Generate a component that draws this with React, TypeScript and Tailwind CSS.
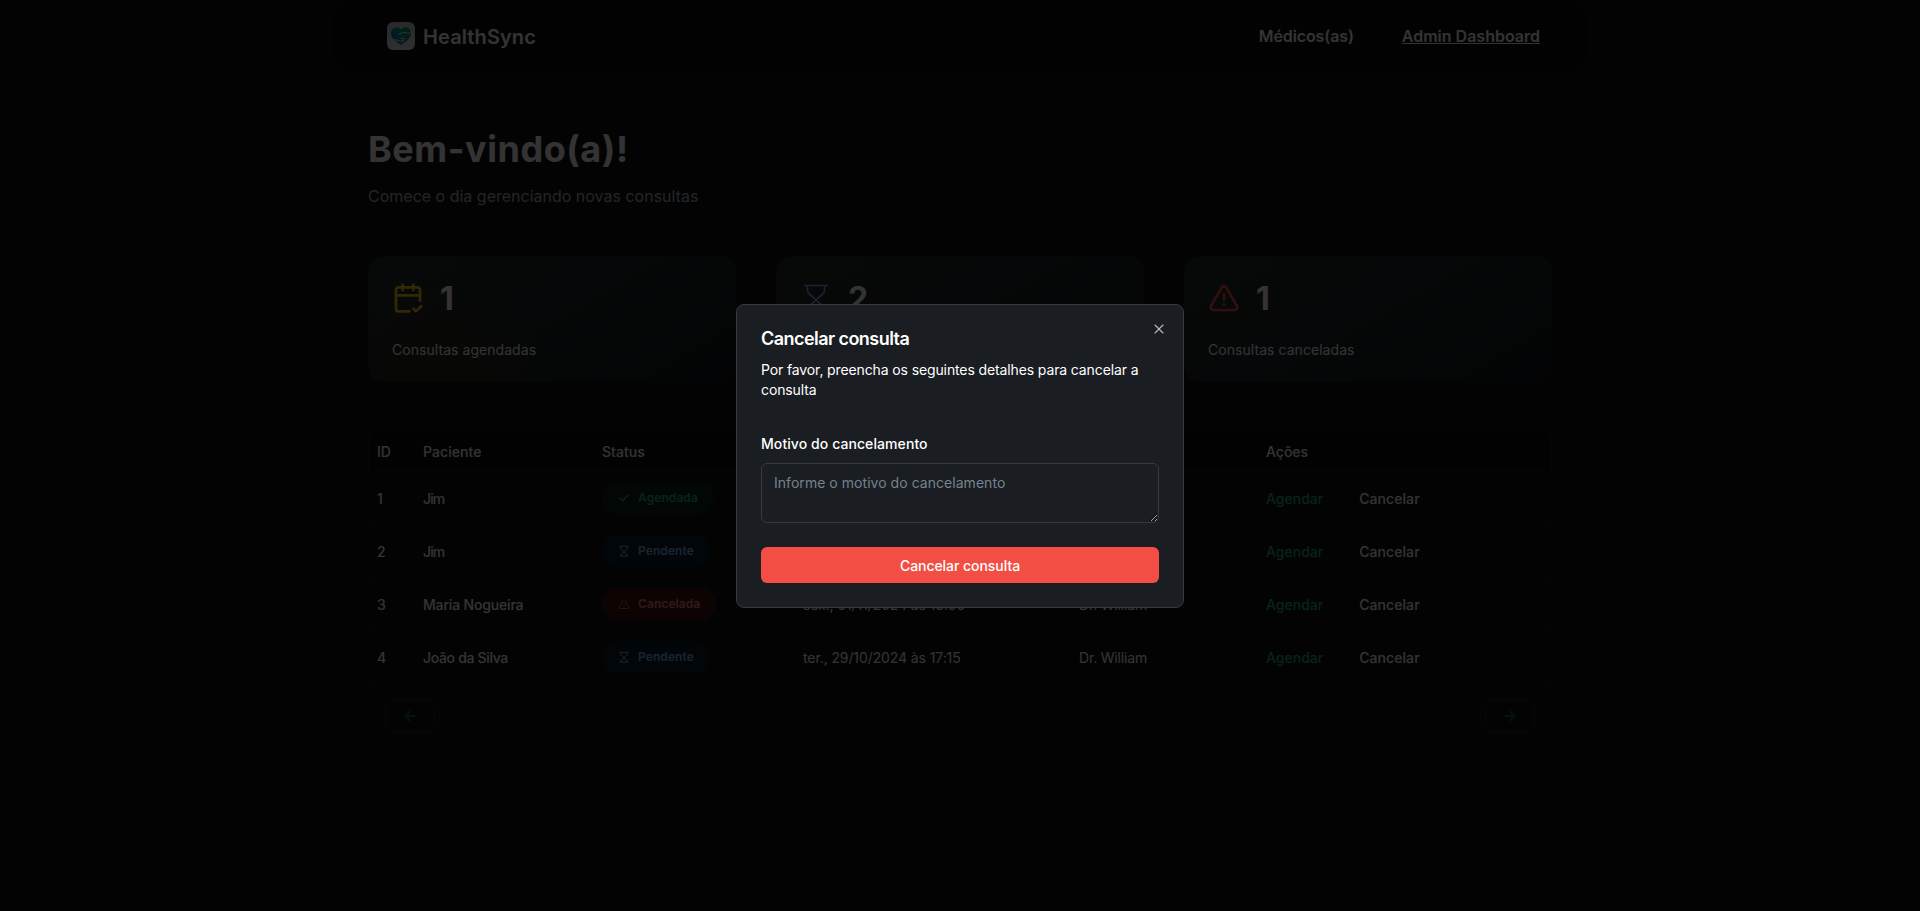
import React from "react";
import { ArrowLeft, ArrowRight, CalendarCheck2, Check, TriangleAlert, X } from "lucide-react";

type Status = "Agendada" | "Pendente" | "Cancelada";

const rows: { id: number; patient: string; tracking: string; status: Status; date: string; doctor: string }[] = [
  { id: 1, patient: "Jim", tracking: "tracking-[-0.9px]", status: "Agendada", date: "qui., 31/10/2024 às 14:00", doctor: "Dr. William" },
  { id: 2, patient: "Jim", tracking: "tracking-[-0.9px]", status: "Pendente", date: "qua., 30/10/2024 às 10:00", doctor: "Dr. William" },
  { id: 3, patient: "Maria Nogueira", tracking: "tracking-[-0.17px]", status: "Cancelada", date: "sex., 01/11/2024 às 16:00", doctor: "Dr. William" },
  { id: 4, patient: "João da Silva", tracking: "tracking-[-0.33px]", status: "Pendente", date: "ter., 29/10/2024 às 17:15", doctor: "Dr. William" },
];

const columns = "grid grid-cols-[46px_179px_201px_276px_187px_1fr] items-center *:px-2";

function Hourglass({ className, stroke = 1.2 }: { className: string; stroke?: number }) {
  return (
    <svg viewBox="0 0 32 32" fill="none" stroke="currentColor" strokeWidth={stroke} className={className}>
      <path d="M4.500 3.500h23M4.500 29.500h23" strokeLinecap="round" />
      <path d="M7.500 3.500v5.300c0 1 .4 1.700 1.100 2.400L24 25.500v4M24.500 3.500v5.300c0 1-.4 1.700-1.100 2.400L8 25.500v4" />
    </svg>
  );
}

function Logo() {
  return (
    <svg viewBox="0 0 28 28" className="size-7">
      <defs>
        <linearGradient id="tile" x1="0" y1="0" x2="0" y2="1">
          <stop offset="0" stopColor="#c9ccd0" />
          <stop offset="1" stopColor="#eaebee" />
        </linearGradient>
        <linearGradient id="heart" x1="0" y1=".7" x2="1" y2=".2">
          <stop offset="0" stopColor="#006fc4" />
          <stop offset=".45" stopColor="#009494" />
          <stop offset="1" stopColor="#109048" />
        </linearGradient>
      </defs>
      <rect width="28" height="28" rx="6" fill="url(#tile)" />
      <path d="M14 7.600C11.200 3.900 4 4.900 4 11.500c0 5 5.500 8.200 10 11.500 4.500-3.300 10-6.500 10-11.500 0-6.600-7.200-7.600-10-3.900Z" fill="url(#heart)" />
      <path d="M12 12.500c2-2 4.700-2.400 7.300-1.600 1.500.5 3 .3 4.200-.3M5.500 17.600c2-.7 3.800.6 5.800 1.100 2.500.6 5.700 0 6-1.600.1-1.100-2-.7-3.300-.6" fill="none" stroke="#dcdee2" strokeWidth="1.100" strokeLinecap="round" />
    </svg>
  );
}

function StatCard({ icon, count, label, glow }: { icon: React.ReactNode; count: number; label: string; glow: string }) {
  return (
    <div className={`flex h-[126px] flex-1 flex-col rounded-2xl border border-[#1c2121] px-[23px] pt-[21px] ${glow}`}>
      <div className="flex h-10 items-center gap-4">
        {icon}
        <span className="pt-0.5 text-[32px] leading-10 font-bold text-white">{count}</span>
      </div>
      <p className="mt-[22px] text-sm leading-5 tracking-[0.05px] text-white">{label}</p>
    </div>
  );
}

function Badge({ status }: { status: Status }) {
  const base = "flex h-8 w-fit items-center gap-2 rounded-full px-4 text-xs font-semibold tracking-[0.08px]";
  if (status === "Agendada")
    return <div className={`${base} bg-[#0d231b] text-[#24ae7c]`}><Check className="size-3" strokeWidth={3.2} />{status}</div>;
  if (status === "Pendente")
    return <div className={`${base} bg-[#111f2b] text-[#79b5ec]`}><Hourglass stroke={2.6} className="size-3" />{status}</div>;
  return <div className={`${base} bg-[#451311] text-[#f37877]`}><TriangleAlert className="size-3 text-[#f24e43]" />{status}</div>;
}

const cardYellow = "bg-[radial-gradient(circle_at_20%_105%,#282416_0%,transparent_34%),linear-gradient(150deg,#252d2c_0%,#1f262a_45%,#171e1f_70%,#10151a_100%)]";
const cardPlain = "bg-[linear-gradient(150deg,#252d2c_0%,#1f262a_45%,#171e1f_70%,#10151a_100%)]";
const pager = "flex h-8 w-[50px] items-center justify-center rounded-md border border-[#23272b] text-[#105c41]";

export default function App() {
  return (
    <div className="relative h-[911px] overflow-hidden bg-[#101112] font-[Inter,sans-serif] text-white antialiased">
      <div className="mx-auto flex w-7xl flex-col">
        <header className="mx-3 flex h-[72px] items-center justify-between rounded-2xl bg-[#0c0c0d] pr-12 pl-[55px]">
          <div className="flex items-center gap-2">
            <Logo />
            <span className="pt-px text-xl font-semibold tracking-[0.1px]">HealthSync</span>
          </div>
          <nav className="flex gap-12 text-base font-semibold">
            <a className="tracking-[-0.1px]">Médicos(as)</a>
            <a className="underline">Admin Dashboard</a>
          </nav>
        </header>

        <main className="mx-12">
          <h1 className="mt-[54px] text-4xl leading-[46px] font-bold tracking-[0.53px]">Bem-vindo(a)!</h1>
          <p className="mt-3 text-base leading-6 tracking-[0px] text-[#abb8c4]">Comece o dia gerenciando novas consultas</p>

          <section className="mt-12 flex gap-10">
            <StatCard icon={<CalendarCheck2 className="size-8 text-[#ffc91a]" />} count={1} label="Consultas agendadas" glow={cardYellow} />
            <StatCard icon={<Hourglass stroke={1.7} className="size-8 text-[#79b5ec]" />} count={2} label="Consultas pendentes" glow={cardPlain} />
            <StatCard icon={<TriangleAlert className="size-8 text-[#f24e43]" />} count={1} label="Consultas canceladas" glow={cardPlain} />
          </section>

          <section className="mt-12 overflow-hidden rounded-lg border border-[#1a1d21] text-sm font-medium">
            <div className={`${columns} h-[41px] border-b border-[#1a1d21] bg-[#0c0c0d] pt-0.5`}>
              <span>ID</span>
              <span className="tracking-[0.07px]">Paciente</span>
              <span className="tracking-[0.07px]">Status</span>
              <span>Data</span>
              <span>Médico(a)</span>
              <span>Ações</span>
            </div>
            {rows.map((r) => (
              <div key={r.id} className={`${columns} h-[53px] border-b border-[#1a1d21]`}>
                <span className="pt-0.5">{r.id}</span>
                <span className={`pt-0.5 ${r.tracking}`}>{r.patient}</span>
                <div><Badge status={r.status} /></div>
                <span className="pt-0.5 font-normal tracking-[-0.1px]">{r.date}</span>
                <span className="pt-0.5 font-normal tracking-[-0.18px]">{r.doctor}</span>
                <div className="flex gap-9 pt-0.5">
                  <button className="text-[#24ae7c]">Agendar</button>
                  <button className="tracking-[0.08px]">Cancelar</button>
                </div>
              </div>
            ))}
            <div className="flex h-16 items-center justify-between px-4">
              <button className={pager}>
                <ArrowLeft className="size-4" strokeWidth={2.8} />
              </button>
              <button className={pager}>
                <ArrowRight className="size-4" strokeWidth={2.8} />
              </button>
            </div>
          </section>
        </main>
      </div>

      <div className="absolute inset-0 flex items-start justify-center bg-black/80 pt-[304px]">
        <div role="dialog" className="relative h-[304px] w-[448px] rounded-lg border border-[#363a3d] bg-[#1a1d21] p-6">
          <h2 className="pt-px text-lg leading-[18px] font-semibold tracking-[-0.55px]">Cancelar consulta</h2>
          <p className="mt-3 text-sm leading-5 tracking-[-0.12px] whitespace-nowrap">
            Por favor, preencha os seguintes detalhes para cancelar a<br />consulta
          </p>
          <label className="mt-[34px] block text-sm leading-5 font-medium tracking-[0.08px]">Motivo do cancelamento</label>
          <textarea
            placeholder="Informe o motivo do cancelamento"
            className="mt-[9px] block h-[60px] w-full rounded-md border border-[#363a3d] bg-[#1a1d21] px-3 pt-[9px] pb-2 text-sm leading-5 tracking-[0.04px] [color-scheme:dark] placeholder:text-[#76828d]"
          />
          <button className="mt-6 flex h-9 w-full items-center justify-center rounded-md bg-[#f24e43] pt-0.5 text-sm font-medium tracking-[-0.05px]">
            Cancelar consulta
          </button>
          <button className="absolute top-4 right-4 opacity-70">
            <X className="size-4" strokeWidth={1.6} />
          </button>
        </div>
      </div>
    </div>
  );
}
